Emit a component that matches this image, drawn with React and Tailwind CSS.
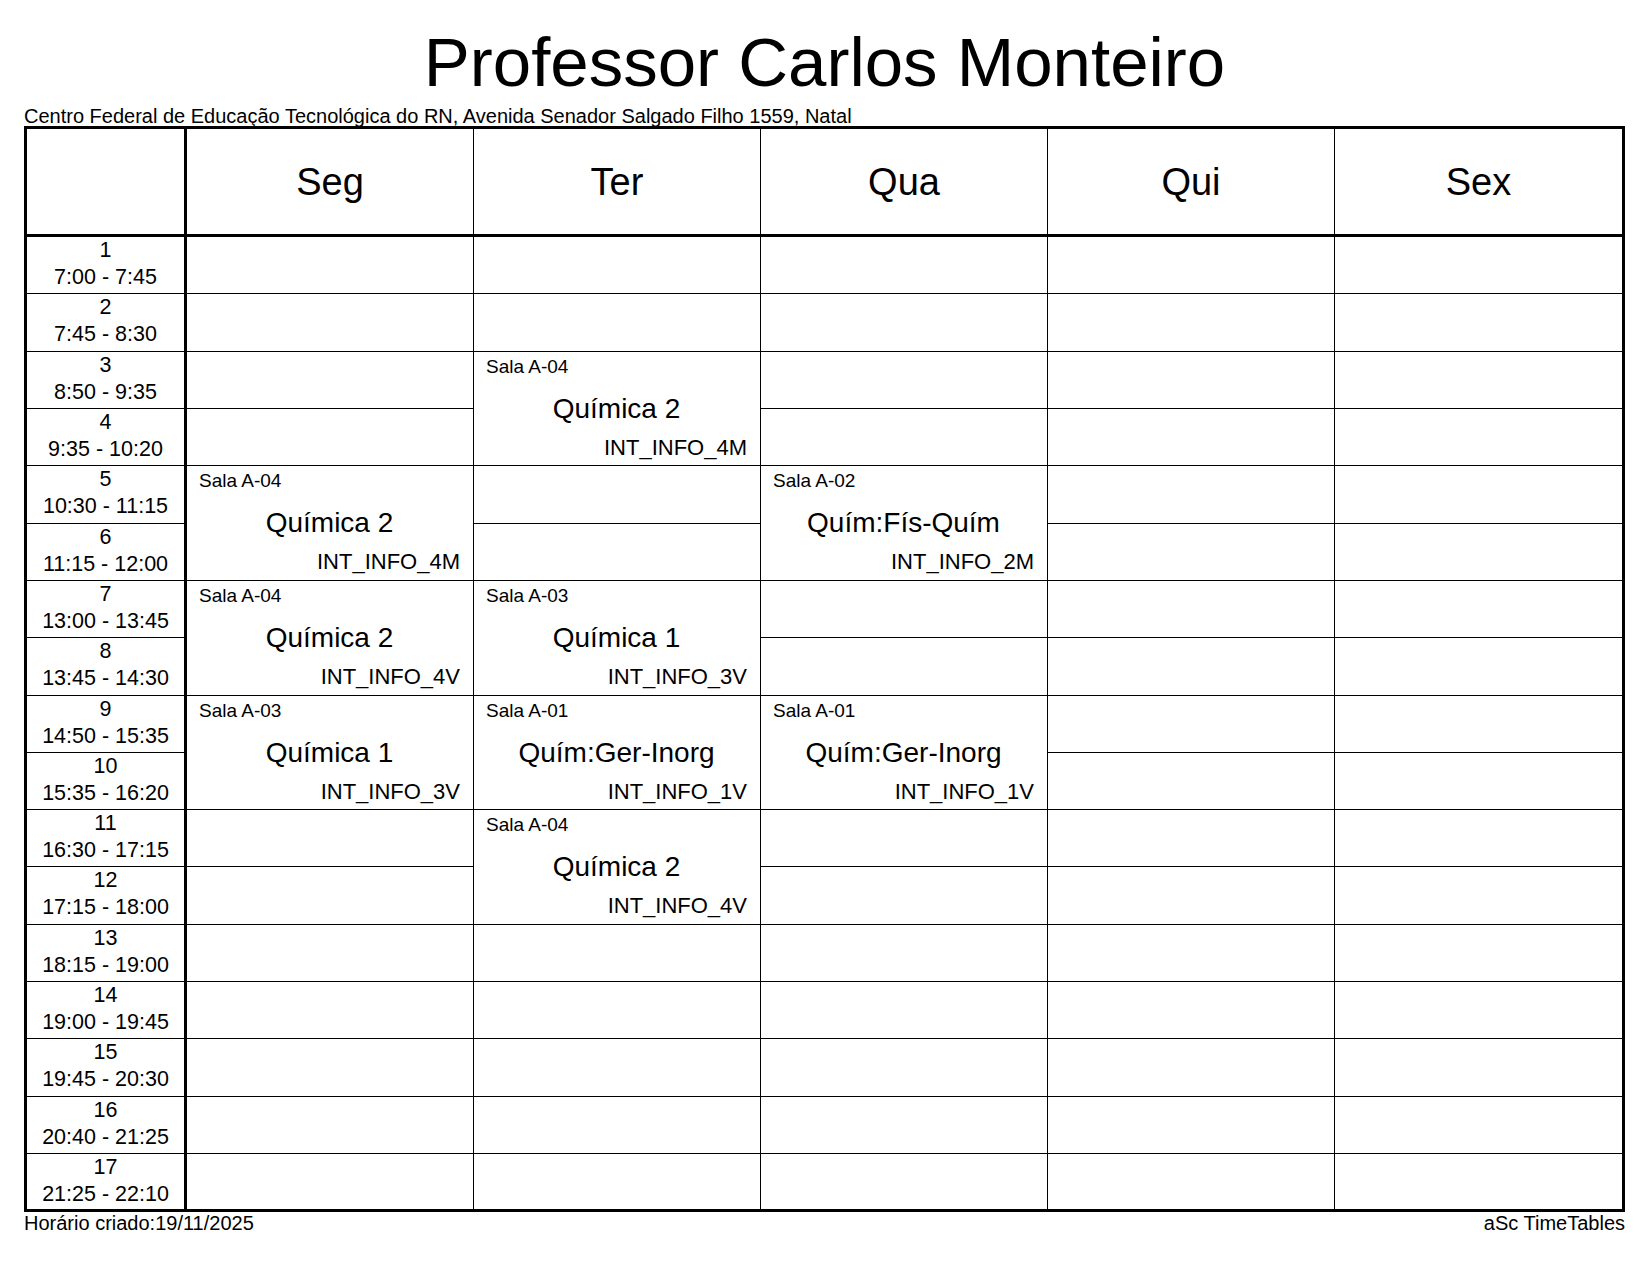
import React from "react";

const periods = [
  ["1", "7:00 - 7:45"],
  ["2", "7:45 - 8:30"],
  ["3", "8:50 - 9:35"],
  ["4", "9:35 - 10:20"],
  ["5", "10:30 - 11:15"],
  ["6", "11:15 - 12:00"],
  ["7", "13:00 - 13:45"],
  ["8", "13:45 - 14:30"],
  ["9", "14:50 - 15:35"],
  ["10", "15:35 - 16:20"],
  ["11", "16:30 - 17:15"],
  ["12", "17:15 - 18:00"],
  ["13", "18:15 - 19:00"],
  ["14", "19:00 - 19:45"],
  ["15", "19:45 - 20:30"],
  ["16", "20:40 - 21:25"],
  ["17", "21:25 - 22:10"],
];

const days = ["Seg", "Ter", "Qua", "Qui", "Sex"];

// key: `${dayIndex}-${startRow}`
const cards = {
  "0-5": { sala: "Sala A-04", subj: "Química 2", cls: "INT_INFO_4M" },
  "0-7": { sala: "Sala A-04", subj: "Química 2", cls: "INT_INFO_4V" },
  "0-9": { sala: "Sala A-03", subj: "Química 1", cls: "INT_INFO_3V" },
  "1-3": { sala: "Sala A-04", subj: "Química 2", cls: "INT_INFO_4M" },
  "1-7": { sala: "Sala A-03", subj: "Química 1", cls: "INT_INFO_3V" },
  "1-9": { sala: "Sala A-01", subj: "Quím:Ger-Inorg", cls: "INT_INFO_1V" },
  "1-11": { sala: "Sala A-04", subj: "Química 2", cls: "INT_INFO_4V" },
  "2-5": { sala: "Sala A-02", subj: "Quím:Fís-Quím", cls: "INT_INFO_2M" },
  "2-9": { sala: "Sala A-01", subj: "Quím:Ger-Inorg", cls: "INT_INFO_1V" },
};

function Card({ card, last }) {
  return (
    <div
      className={
        "row-span-2 flex flex-col border-b border-black pl-[12px] pr-[13px] pt-[5px] " +
        (last ? "" : "border-r")
      }
    >
      <div className="text-[19px] leading-[19px] text-left">{card.sala}</div>
      <div className="mt-[19px] text-[28px] leading-[28px] text-center">{card.subj}</div>
      <div className="mt-[14px] text-[22px] leading-[22px] text-right">{card.cls}</div>
    </div>
  );
}

export default function App() {
  const cells = [];
  // header
  cells.push(
    <div key="h-empty" className="border-r-[3px] border-b-[3px] border-black" />
  );
  days.forEach((d, i) => {
    cells.push(
      <div
        key={"h-" + d}
        className={
          "flex items-center justify-center border-b-[3px] border-black text-[38px] leading-[38px] " +
          (i < 4 ? "border-r" : "")
        }
      >
        {d}
      </div>
    );
  });

  const covered = new Set();
  periods.forEach(([n, t], idx) => {
    const r = idx + 1;
    const lastRow = r === 17;
    cells.push(
      <div
        key={"t-" + r}
        className={
          "flex flex-col items-center border-r-[3px] border-black text-[21.5px] leading-[27px] " +
          (lastRow ? "" : "border-b")
        }
      >
        <div>{n}</div>
        <div>{t}</div>
      </div>
    );
    days.forEach((d, di) => {
      const key = di + "-" + r;
      if (covered.has(key)) return;
      const card = cards[key];
      if (card) {
        covered.add(di + "-" + (r + 1));
        cells.push(<Card key={"c-" + key} card={card} last={di === 4} />);
      } else {
        cells.push(
          <div
            key={"e-" + key}
            className={
              "border-black " + (di < 4 ? "border-r " : "") + (lastRow ? "" : "border-b")
            }
          />
        );
      }
    });
  });

  return (
    <div
      className="w-[1650px] h-[1275px] bg-white text-black pt-[28px]"
      style={{ fontFamily: '"Liberation Sans", Arial, sans-serif' }}
    >
      <div className="w-[1601px] ml-[24px]">
        <div className="text-center text-[69px] leading-[70px]">Professor Carlos Monteiro</div>
        <div className="mt-[8px] text-[20px] leading-[20px] whitespace-nowrap">
          Centro Federal de Educação Tecnológica do RN, Avenida Senador Salgado Filho 1559, Natal
        </div>
        <div className="border-[3px] border-black">
          <div className="grid grid-cols-[160px_repeat(5,287px)] grid-rows-[108px_repeat(16,57.32px)_1fr] h-[1080px]">
            {cells}
          </div>
        </div>
        <div className="flex justify-between text-[20px] leading-[23px]">
          <span>Horário criado:19/11/2025</span>
          <span>aSc TimeTables</span>
        </div>
      </div>
    </div>
  );
}
